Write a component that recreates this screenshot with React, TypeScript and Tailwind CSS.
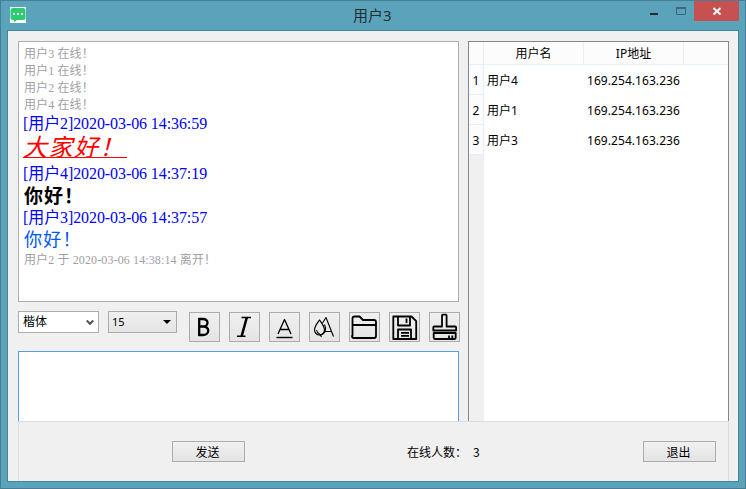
import React from "react";

const serif = "font-['Liberation_Serif','Noto_Sans_CJK_SC',serif]";
const ui = "font-['Noto_Sans','Noto_Sans_CJK_SC',sans-serif]";
const kai = "font-['Noto_Sans_CJK_SC',sans-serif]";

function Notice({ children }: { children: React.ReactNode }) {
  return <p className="h-[17px] pl-px text-[12px] leading-[17px] tracking-[0.12px] text-[#a0a0a4]">{children}</p>;
}

function Stamp({ children }: { children: React.ReactNode }) {
  return <p className="h-5 text-[16px] leading-5 tracking-[-0.09px] text-[#0000ff]">{children}</p>;
}

function Tool({ children, label }: { children: React.ReactNode; label: string }) {
  return (
    <button
      aria-label={label}
      className="flex h-[30px] w-[31px] shrink-0 items-center justify-center border border-[#acacac] bg-gradient-to-b from-[#f0f0f0] to-[#e4e4e4]"
    >
      <svg width="29" height="28" viewBox="0 0 29 28" fill="none" stroke="#000" strokeWidth="1.8" strokeLinejoin="round">
        {children}
      </svg>
    </button>
  );
}

function Push({ children }: { children: React.ReactNode }) {
  return (
    <button className="h-[21px] w-[73px] border border-[#acacac] bg-gradient-to-b from-[#f0f0f0] to-[#e4e4e4] pr-[2px] text-center text-[12px] leading-[19px]">
      {children}
    </button>
  );
}

const users = [
  ["用户4", "169.254.163.236"],
  ["用户1", "169.254.163.236"],
  ["用户3", "169.254.163.236"],
];

export default function App() {
  return (
    <div className={`flex h-[489px] w-[746px] flex-col overflow-hidden border border-[#457f91] bg-[#5ba3bb] text-black ${ui}`}>
      <header className="flex h-[29px] shrink-0 items-start pr-[6px]">
        <svg className="mt-[6px] ml-[9px] shrink-0" width="16" height="16" viewBox="0 0 16 16">
          <rect width="16" height="16" fill="#fafafa" />
          <path d="M3 1h10q2.500 0 2.500 2.500v7q0 2.500-2.500 2.500H7L4 15.300V13H3Q.5 13 .5 10.500v-7Q.5 1 3 1Z" fill="#2ecc71" />
          <path d="M3 6h2v2H3zM7 6h2v2H7zM11 6h2v2h-2z" fill="#e9fff1" />
        </svg>
        <h1 className="mt-[4px] ml-[327px] h-5 w-[200px] text-[15px] leading-5 text-[#1f2f35]">用户3</h1>
        <div className="ml-auto flex">
          <svg width="45" height="20" viewBox="0 0 45 20">
            <path d="M1 12h8v2H1z" fill="#222d32" />
            <path d="M27.500 7v6.500h9V7" fill="none" stroke="#3d6776" />
            <path d="M27 6h10v2H27z" fill="#3d6776" />
          </svg>
          <button aria-label="关闭" className="flex h-5 w-[45px] items-center justify-center bg-[#c75050]">
            <svg width="45" height="20" viewBox="0 0 45 20" stroke="#fff" strokeWidth="1.900">
              <path d="m19.500 7 7 6.500m0-6.500-7 6.500" />
            </svg>
          </button>
        </div>
      </header>

      <main className="ml-[6px] flex h-[452px] w-[732px] flex-col border border-[#468499] bg-[#f0f0f0] pt-[10px] pr-[9px] pl-[10px]">
        <div className="flex h-[380px] shrink-0 justify-between">
          <section className="flex w-[441px] flex-col">
            <div className={`h-[261px] shrink-0 overflow-hidden border border-[#abadb3] bg-white pt-1 pl-[4px] whitespace-nowrap ${serif}`}>
              <Notice>用户3 在线！</Notice>
              <Notice>用户1 在线！</Notice>
              <Notice>用户2 在线！</Notice>
              <Notice>用户4 在线！</Notice>
              <Stamp>[用户2]2020-03-06 14:36:59</Stamp>
              <p className={`h-[30px] text-[24px] text-[#ff0000] italic ${kai}`}>
                <span className="block h-[24px] w-[104px] border-b border-[#ff0000] leading-[23px] tracking-[1.500px]">大家好！</span>
              </p>
              <Stamp>[用户4]2020-03-06 14:37:19</Stamp>
              <p className={`h-6 pl-px text-[19px] leading-[22px] font-bold tracking-[1px] ${kai}`}>你好！</p>
              <Stamp>[用户3]2020-03-06 14:37:57</Stamp>
              <p className={`h-[24px] pl-px text-[18px] leading-[20px] tracking-[1.200px] text-[#0055ff] ${kai}`}>你好！</p>
              <Notice>用户2 于 2020-03-06 14:38:14 离开！</Notice>
            </div>

            <div className="mt-[9px] flex h-10 shrink-0 items-start text-[12px]">
              <div className="flex h-[22px] w-[81px] shrink-0 items-center justify-between border border-[#abadb3] bg-white pr-1 pl-1">
                <span className="leading-5">楷体</span>
                <svg width="8" height="7" viewBox="0 0 8 7" fill="none" stroke="#555" strokeWidth="2">
                  <path d="m.7 1.500 3.300 3.300 3.300-3.300" />
                </svg>
              </div>
              <div className="ml-[9px] flex h-[22px] w-[69px] shrink-0 items-center justify-between border border-[#acacac] bg-gradient-to-b from-[#f0f0f0] to-[#e5e5e5] pr-[5px] pl-[3px]">
                <span className="text-[11px] leading-5">15</span>
                <svg width="8" height="4" viewBox="0 0 8 4">
                  <path d="M0 0h8L4 4z" />
                </svg>
              </div>
              <div className="mt-px ml-3 flex shrink-0 gap-[9px]">
                <Tool label="粗体">
                  <path d="M9.200 5v18M8.500 6h4.500c6 0 6 7.500 0 7.500H9.500M13 13.500c7.500 0 6.500 8.500 0 8.500H8.500" strokeWidth="2.300" strokeLinejoin="miter" />
                </Tool>
                <Tool label="斜体">
                  <path d="M11.500 4.500H21M7 23.300h8.500" strokeWidth="1.600" />
                  <path d="m16.800 4.500-5.200 18.800" strokeWidth="2.500" />
                </Tool>
                <Tool label="下划线">
                  <path d="m8 21 6.500-14.500L21 21M10.200 16.500h8.600" strokeWidth="1.300" />
                  <path d="M6.500 24.500h16" strokeWidth="1.400" />
                </Tool>
                <Tool label="颜色">
                  <path d="M9.500 7C7 10.500 4.500 13.500 4.500 17a5 5 0 0 0 10 0c0-3.500-2.500-6.500-5-10Z" strokeWidth="1.200" />
                  <path d="m12.500 10 3.500-5.500 7.500 19M14.500 18.500H21M14.500 11.500c2.500 5 1 9-4.500 11M6.500 17q.5 3 3 4l2 3" strokeWidth="1.100" />
                </Tool>
                <Tool label="打开">
                  <path d="M2.500 23V5.500q0-2 2-2h5l3.500 3.500h11q2 0 2 2V23q0 2-2 2h-20q-2 0-2-2ZM2.500 12h24" />
                </Tool>
                <Tool label="保存">
                  <path d="M3.300 3.500h18.200l4.700 4.700v17.800H3.300ZM8 4v8.500h12V4M16.500 5.500V10M8 25.500V16.500h13v9M11 19.800h8M11 22.800h8" />
                </Tool>
                <Tool label="清除">
                  <path d="M12 13.500V2.500q0-.8.800-.8h3q.8 0 .8.800v11h8.600q.9 0 .9 1V17.500H3.300v-3q0-1 .9-1ZM3.700 20v4.500q0 1.500 1.300 1.500h19.500q1.200 0 1.200-1.500V20ZM19 25.500v-3M22.300 25.500v-3" />
                </Tool>
              </div>
            </div>
            <div className="h-[70px] shrink-0 border border-b-0 border-[#569de5] bg-white" />
          </section>

          <section className="flex w-[261px] flex-col border border-b-0 border-[#828790] bg-white text-[12px]">
            <div className="flex h-[23px] shrink-0 border-b border-[#e5effc] bg-[#fcfcfc] text-center leading-[24px]">
              <div className="w-[15px] border-r border-[#e5effc]" />
              <div className="w-[100px] border-r border-[#e5effc]">用户名</div>
              <div className="w-[100px] border-r border-[#e5effc]">IP地址</div>
            </div>
            {users.map(([name, ip], i) => (
              <div key={i} className="flex h-[30px] shrink-0 leading-[32px] whitespace-nowrap">
                <div className="w-[15px] border-r border-b border-[#e5effc] bg-[#fcfcfc] text-center">{i + 1}</div>
                <div className="w-[100px] pl-[3px]">{name}</div>
                <div className="pl-[3px] tracking-[0.06px]">{ip}</div>
              </div>
            ))}
            <div className="w-[15px] flex-1 bg-[#f0f0f0]" />
          </section>
        </div>

        <footer className="flex h-[60px] shrink-0 items-start border border-b-0 border-[#dcdcdc] pt-[19px] pr-3 pl-[153px] font-['Noto_Sans_CJK_SC',sans-serif] text-[12px]">
          <Push>发送</Push>
          <div className="ml-[162px] flex h-[21px] w-[80px] items-center whitespace-nowrap">
            <span className="w-[66px]">在线人数：</span>
            <span>3</span>
          </div>
          <div className="ml-auto">
            <Push>退出</Push>
          </div>
        </footer>
      </main>
    </div>
  );
}
